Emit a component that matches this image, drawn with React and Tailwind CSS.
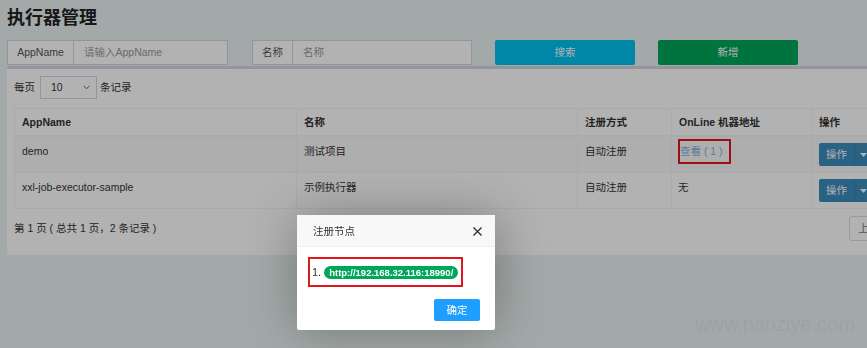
import React from 'react';

const rows = [
  { appname: 'demo', title: '测试项目', type: '自动注册', online: 1 },
  { appname: 'xxl-job-executor-sample', title: '示例执行器', type: '自动注册', online: 0 },
];

const OpButton = () => (
  <div className="flex h-[23px] w-[52px] overflow-hidden rounded-[2px] text-white">
    <div className="flex w-[35px] items-center justify-center bg-[#3c8dbc]">操作</div>
    <div className="flex w-[17px] items-center justify-center border-l border-[#367fa9] bg-[#3c8dbc]">
      <svg width="7" height="4" viewBox="0 0 7 4">
        <path d="M0 0h7L3.5 4z" fill="#fff" />
      </svg>
    </div>
  </div>
);

const App = () => {
  return (
    <div className="relative h-[348px] w-full overflow-hidden bg-[#eaf2f1] pl-[7px] font-['Liberation_Sans','Noto_Sans_CJK_SC',sans-serif] text-[10.5px] leading-[15px] text-[#333]">
      {/* header */}
      <h1 className="pt-[6px] text-[18px] leading-[24px] font-semibold text-[#222]">执行器管理</h1>

      {/* search row */}
      <div className="mt-[10px] flex items-start">
        <div className="flex h-[25px] w-[221px] border border-[#d2d6de] bg-white">
          <div className="flex w-[66px] items-center justify-center border-r border-[#d2d6de] text-[#555]">AppName</div>
          <div className="flex flex-1 items-center pl-[10px] text-[#999]">请输入AppName</div>
        </div>
        <div className="ml-[24px] flex h-[25px] w-[220px] border border-[#d2d6de] bg-white">
          <div className="flex w-[40px] items-center justify-center border-r border-[#d2d6de] text-[#555]">名称</div>
          <div className="flex flex-1 items-center pl-[10px] text-[#999]">名称</div>
        </div>
        <button className="ml-[23px] h-[25px] w-[140px] rounded-[2px] bg-[#00c0ef] text-white">搜索</button>
        <button className="ml-[23px] h-[25px] w-[140px] rounded-[2px] bg-[#00a65a] text-white">新增</button>
      </div>

      {/* box */}
      <div className="mt-px w-[949px] rounded-[2px] border-t-[3px] border-[#d2d6de] bg-white px-[7px] pt-[7px] pb-[14px]">
        <div className="flex h-[23px] items-center">
          <span>每页</span>
          <div className="ml-[5px] flex h-[23px] w-[57px] items-center justify-between border border-[#d2d6de] pr-[6px] pl-[10px]">
            <span>10</span>
            <svg width="7" height="5" viewBox="0 0 7 5">
              <path d="M0.5 0.8L3.5 3.8L6.5 0.8" fill="none" stroke="#666" strokeWidth="1" />
            </svg>
          </div>
          <span className="ml-[3px]">条记录</span>
        </div>

        <table className="mt-[9px] w-[935px] table-fixed border-collapse border border-[#f4f4f4]">
          <colgroup>
            <col className="w-[282px]" />
            <col className="w-[281px]" />
            <col className="w-[94px]" />
            <col className="w-[140px]" />
            <col className="w-[138px]" />
          </colgroup>
          <thead>
            <tr className="border-b-2 border-[#f4f4f4] text-left">
              <th className="border-r border-[#f4f4f4] px-[7px] pt-[6px] pb-[5px] font-bold">AppName</th>
              <th className="border-r border-[#f4f4f4] px-[7px] pt-[6px] pb-[5px] font-bold">名称</th>
              <th className="border-r border-[#f4f4f4] px-[7px] pt-[6px] pb-[5px] font-bold">注册方式</th>
              <th className="border-r border-[#f4f4f4] px-[7px] pt-[6px] pb-[5px] font-bold">OnLine 机器地址</th>
              <th className="px-[7px] pt-[6px] pb-[5px] font-bold">操作</th>
            </tr>
          </thead>
          <tbody>
            {rows.map((row, index) => (
              <tr key={row.appname} className={`border-b border-[#f4f4f4] ${index % 2 === 0 ? 'bg-[#f9f9f9]' : 'bg-white'}`}>
                <td className="border-r border-[#f4f4f4] px-[7px] pt-[7px] align-top">{row.appname}</td>
                <td className="border-r border-[#f4f4f4] px-[7px] pt-[7px] align-top">{row.title}</td>
                <td className="border-r border-[#f4f4f4] px-[7px] pt-[7px] align-top">{row.type}</td>
                <td className="border-r border-[#f4f4f4] px-[6px] pt-[7px] align-top">
                  {row.online > 0 ? (
                    <span className="-my-[5px] inline-block border-2 border-[#e3161b] py-[3px] pr-[6px] text-[#7fb4d8]">
                      查看 ( {row.online} )
                    </span>
                  ) : (
                    '无'
                  )}
                </td>
                <td className="px-[7px] py-[6px] align-top">
                  <OpButton />
                </td>
              </tr>
            ))}
          </tbody>
        </table>

        <div className="mt-[7px] flex h-[25px] items-center justify-between">
          <span>第 1 页 ( 总共 1 页，2 条记录 )</span>
          <div className="flex h-[25px]">
            <div className="flex items-center rounded-l-[3px] border border-[#ddd] px-[8px] text-[#777]">上页</div>
            <div className="flex items-center border border-l-0 border-[#ddd] bg-[#3c8dbc] px-[8px] text-white">1</div>
            <div className="flex items-center rounded-r-[3px] border border-l-0 border-[#ddd] px-[8px] text-[#777]">下页</div>
          </div>
        </div>
      </div>

      {/* shade */}
      <div className="fixed inset-0 z-10 bg-black/30" />

      {/* dialog */}
      <div className="absolute top-[215px] left-[297px] z-20 w-[198px] rounded-[2px] bg-white shadow-[1px_1px_50px_rgba(0,0,0,0.3)]">
        <div className="relative h-[32px] border-b border-[#eee] bg-[#f8f8f8] pl-[16px] leading-[32px] text-[#333]">
          注册节点
          <svg className="absolute top-[12px] right-[13px]" width="9" height="9" viewBox="0 0 9 9">
            <path d="M0.5 0.5L8.5 8.5M8.5 0.5L0.5 8.5" stroke="#333" strokeWidth="1.4" />
          </svg>
        </div>
        <div className="px-[11px] pt-[10px]">
          <div className="flex h-[30px] w-[155px] items-center border-2 border-[#e3161b] pl-[2px]">
            <span className="text-[11px]">1.</span>
            <span className="ml-[3px] h-[13px] rounded-full bg-[#00a65a] px-[5px] text-[9.5px] leading-[13px] font-bold text-white">
              http://192.168.32.116:18990/
            </span>
          </div>
        </div>
        <div className="flex justify-end px-[15px] pt-[12px] pb-[9px]">
          <button className="h-[22px] w-[46px] rounded-[2px] bg-[#1e9fff] text-white">确定</button>
        </div>
      </div>

      {/* watermark */}
      <div className="absolute top-[313px] left-[695px] z-30 font-['Liberation_Sans',sans-serif] text-[20px] leading-[23px] text-black/[0.04]">
        www.panziye.com
      </div>
    </div>
  );
};

export default App;
